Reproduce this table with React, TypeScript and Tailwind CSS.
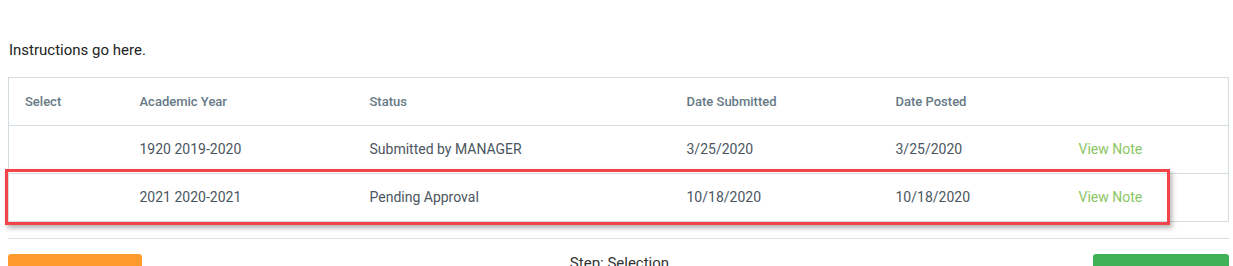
import React from 'react';

type Submission = {
  year: string;
  status: string;
  submitted: string;
  posted: string;
};

const rows: Submission[] = [
  { year: '1920 2019-2020', status: 'Submitted by MANAGER', submitted: '3/25/2020', posted: '3/25/2020' },
  { year: '2021 2020-2021', status: 'Pending Approval', submitted: '10/18/2020', posted: '10/18/2020' },
];

const headers = ['Select', 'Academic Year', 'Status', 'Date Submitted', 'Date Posted', ''];

const App: React.FC = () => {
  return (
    <div
      className="relative w-[1233px] h-[266px] overflow-hidden bg-white"
      style={{ fontFamily: 'Roboto, "Liberation Sans", sans-serif' }}
    >
      <div className="pl-2 pr-1 pt-[40px]">
        <p className="text-[15px] leading-[20px] text-[#222] mb-[17px] pl-px">Instructions go here.</p>

        <table className="w-[1221px] table-fixed border-collapse border border-[#d3dce0] text-left">
          <colgroup>
            <col className="w-[115px]" />
            <col className="w-[230px]" />
            <col className="w-[317px]" />
            <col className="w-[209px]" />
            <col className="w-[183px]" />
            <col />
          </colgroup>
          <thead>
            <tr className="h-[48px] border-b border-[#d3dce0]">
              {headers.map((h, i) => (
                <th key={i} className="pl-4 text-[13px] font-medium text-[#667985] align-middle">
                  {h}
                </th>
              ))}
            </tr>
          </thead>
          <tbody>
            {rows.map((r) => (
              <tr key={r.year} className="h-[48px] border-b border-[#d3dce0] text-[14px] text-[#4b5660]">
                <td className="pl-4"></td>
                <td className="pl-4">{r.year}</td>
                <td className="pl-4">{r.status}</td>
                <td className="pl-4">{r.submitted}</td>
                <td className="pl-4">{r.posted}</td>
                <td className="pl-4">
                  <a className="text-[#8cc665] cursor-pointer">View Note</a>
                </td>
              </tr>
            ))}
          </tbody>
        </table>

        <hr className="mt-4 w-[1221px] border-t border-[#dedede]" />

        <div className="mt-[15px] w-[1221px] flex items-start justify-between">
          <button className="w-[134px] h-[34px] rounded-[3px] bg-[#ff9a2e]"></button>
          <span className="-mt-[1px] ml-[4px] text-[15px] leading-[20px] text-[#333]">Step: Selection</span>
          <button className="w-[136px] h-[34px] rounded-[3px] bg-[#41b157]"></button>
        </div>
      </div>

      {/* highlight frame around the pending row */}
      <div className="absolute left-[5px] top-[169px] w-[1165px] h-[56px] border-[3px] border-[#f4424a] shadow-[2px_3px_5px_rgba(0,0,0,0.3)] pointer-events-none"></div>
    </div>
  );
};

export default App;
